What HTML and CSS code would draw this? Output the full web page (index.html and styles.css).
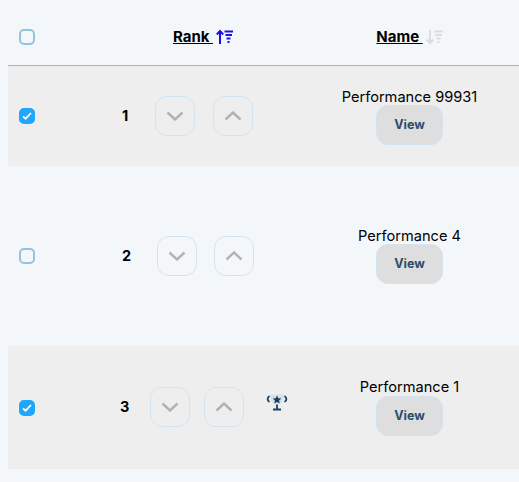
FILE: index.html
```html
<!DOCTYPE html>
<html lang="en">
<head>
    <meta charset="UTF-8">
    <meta name="viewport" content="width=device-width, initial-scale=1.0">
    <title>Performances</title>
    <link rel="stylesheet" href="styles.css">
</head>
<body>

    <div class="list">
        <!-- Header -->
        <div class="row head-row">
            <div class="check-cell"><span class="check"></span></div>
            <div class="head-cell">
                <a href="#rank" class="sort-link">Rank&nbsp;</a>
                <svg class="sort-icon sort-active" width="17" height="16" viewBox="0 0 17 16">
                    <path d="M4 15V2M.8 5.500L4 2l3.200 3.500"/>
                    <path d="M8.500 2.500h8.500M9.500 6h6.500M10.500 9.500h4M11.500 13h2"/>
                </svg>
            </div>
            <div class="head-cell name-head">
                <a href="#name" class="sort-link">Name&nbsp;</a>
                <svg class="sort-icon" width="17" height="16" viewBox="0 0 17 16">
                    <path d="M4 1v13M.8 10.500L4 14l3.200-3.500"/>
                    <path d="M8.500 2.500h8.500M9.500 6h6.500M10.500 9.500h4M11.500 13h2"/>
                </svg>
            </div>
        </div>

        <div class="row perf-row row-one shaded">
            <div class="check-cell">
                <span class="check checked"><svg width="10" height="8" viewBox="0 0 10 8"><path d="M1 4.400l2.600 2.300L9 1"/></svg></span>
            </div>
            <div class="rank-cell">
                <span class="rank-num">1</span>
                <button class="arrow-btn"><svg width="18" height="10" viewBox="0 0 18 10"><path d="M1.500 1.500L9 8.500l7.500-7"/></svg></button>
                <button class="arrow-btn"><svg width="18" height="10" viewBox="0 0 18 10"><path d="M1.500 8.500L9 1.500l7.500 7"/></svg></button>
            </div>
            <div class="name-cell">
                <span class="perf-name">Performance 99931</span>
                <button class="view-btn">View</button>
            </div>
        </div>

        <div class="row perf-row row-two">
            <div class="check-cell"><span class="check"></span></div>
            <div class="rank-cell">
                <span class="rank-num">2</span>
                <button class="arrow-btn"><svg width="18" height="10" viewBox="0 0 18 10"><path d="M1.500 1.500L9 8.500l7.500-7"/></svg></button>
                <button class="arrow-btn"><svg width="18" height="10" viewBox="0 0 18 10"><path d="M1.500 8.500L9 1.500l7.500 7"/></svg></button>
            </div>
            <div class="name-cell">
                <span class="perf-name">Performance 4</span>
                <button class="view-btn">View</button>
            </div>
        </div>

        <div class="row perf-row row-three shaded">
            <div class="check-cell">
                <span class="check checked"><svg width="10" height="8" viewBox="0 0 10 8"><path d="M1 4.400l2.600 2.300L9 1"/></svg></span>
            </div>
            <div class="rank-cell">
                <span class="rank-num">3</span>
                <button class="arrow-btn"><svg width="18" height="10" viewBox="0 0 18 10"><path d="M1.500 1.500L9 8.500l7.500-7"/></svg></button>
                <button class="arrow-btn"><svg width="18" height="10" viewBox="0 0 18 10"><path d="M1.500 8.500L9 1.500l7.500 7"/></svg></button>
                <svg class="trophy" width="22" height="18" viewBox="0 0 22 18">
                    <path class="trophy-cup" d="M4 .5h14c0 6-2.500 10-7 10S4 6.500 4 .5z"/>
                    <path class="trophy-line" d="M3.500 2C1 3.500 1 6.500 3.500 8M18.500 2c2.500 1.500 2.500 4.500 0 6M11 10.500v4.500M7 15.500h8"/>
                    <path class="trophy-star" d="M11 1.500l1.300 2.700 3 .3-2.200 2 .6 3-2.700-1.500-2.700 1.500.6-3-2.200-2 3-.3z"/>
                </svg>
            </div>
            <div class="name-cell">
                <span class="perf-name">Performance 1</span>
                <button class="view-btn">View</button>
            </div>
        </div>
    </div>

</body>
</html>
```

FILE: styles.css
```css
* {
    margin: 0;
    padding: 0;
    box-sizing: border-box;
}

body {
    font-family: Inter, "Liberation Sans", sans-serif;
    background-color: #f4f7fa;
    color: #000;
    padding: 8px 0 0 8px;
}

.row {
    display: grid;
    grid-template-columns: 76px 238px 1fr;
    align-items: center;
}

.head-row {
    height: 58px;
    border-bottom: 1px solid #b0b0b0;
}

.shaded {
    background-color: #eeeeee;
}

.row-one {
    height: 100px;
}

.row-two {
    height: 180px;
}

.row-three {
    height: 123px;
}

.check-cell {
    padding-left: 11px;
    display: flex;
}

.check {
    width: 16px;
    height: 16px;
    border: 2px solid #93c3dd;
    border-radius: 5px;
    display: flex;
    align-items: center;
    justify-content: center;
}

.check.checked {
    background-color: #1ea7fd;
    border-color: #1ea7fd;
}

.check svg {
    flex-shrink: 0;
}

.check svg path {
    fill: none;
    stroke: #fff;
    stroke-width: 1.8;
}

.head-cell {
    display: flex;
    align-items: center;
    justify-content: center;
}

.name-head {
    padding-right: 22px;
}

.sort-link {
    color: #000;
    font-size: 15px;
    font-weight: 700;
    text-decoration: underline;
}

.sort-icon {
    margin-left: 3px;
}

.sort-icon path {
    fill: none;
    stroke: #d9dde1;
    stroke-width: 2;
}

.sort-active path {
    stroke: #1a10e8;
}

.rank-cell {
    display: flex;
    align-items: center;
}

.rank-num {
    font-size: 14.5px;
    font-weight: 700;
    width: 8px;
    padding-bottom: 2px;
}

.row-one .rank-cell {
    padding-left: 38px;
    gap: 18px;
}

.row-one .rank-num {
    margin-right: 7px;
}

.row-two .rank-cell {
    padding-left: 38px;
    gap: 17px;
}

.row-two .rank-num {
    margin-right: 10px;
}

.row-three .rank-cell {
    padding-left: 36px;
    padding-bottom: 1px;
    gap: 14px;
}

.row-three .rank-num {
    margin-right: 8px;
}

.arrow-btn {
    width: 40px;
    height: 40px;
    background: none;
    border: 1px solid #d3e4f1;
    border-radius: 12px;
    display: flex;
    align-items: center;
    justify-content: center;
}

.arrow-btn path {
    fill: none;
    stroke: #b2b2b2;
    stroke-width: 2.4;
}

.trophy {
    margin-left: 8px;
    margin-top: -8px;
}

.trophy-cup {
    fill: #d3e2ec;
}

.trophy-line {
    fill: none;
    stroke: #1f3f5b;
    stroke-width: 1.8;
}

.trophy-star {
    fill: #1f3f5b;
}

.name-cell {
    display: flex;
    flex-direction: column;
    align-items: center;
    padding-right: 22px;
}

.row-two .name-cell {
    padding-bottom: 2px;
}

.row-three .name-cell {
    padding-bottom: 1px;
}

.perf-name {
    font-size: 14.6px;
    line-height: 19px;
    margin-bottom: -1px;
}

.row-one .perf-name,
.row-two .perf-name {
    margin-bottom: -2px;
}

.view-btn {
    width: 67px;
    height: 40px;
    padding-bottom: 1px;
    background-color: #dedede;
    border: 1px solid #d3e4f1;
    border-radius: 12px;
    color: #2c4d6b;
    font-family: Inter, "Liberation Sans", sans-serif;
    font-size: 12.5px;
    font-weight: 700;
}
```
